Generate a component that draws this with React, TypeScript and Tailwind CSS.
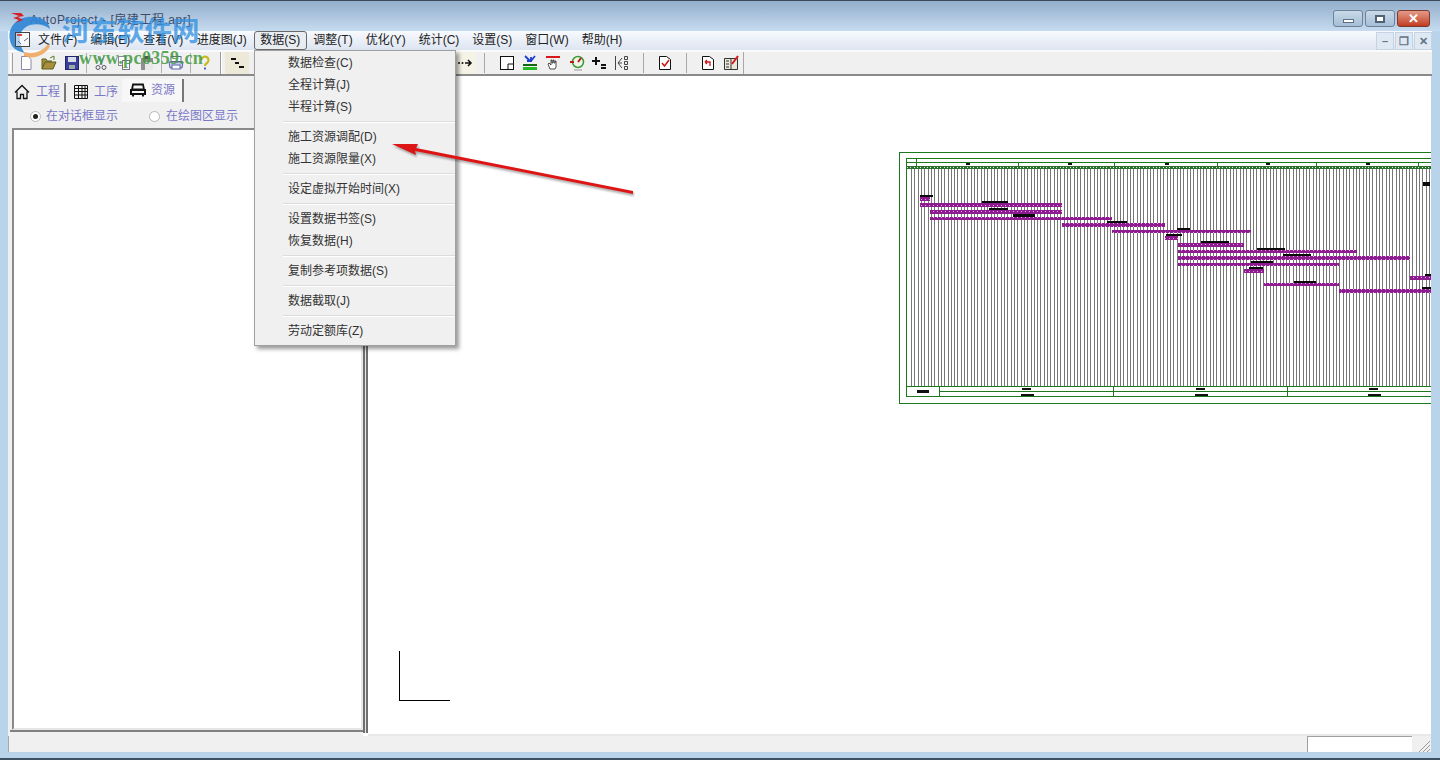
import { Fragment } from "react";

const menus = ["文件(F)", "编辑(E)", "查看(V)", "进度图(J)", "数据(S)", "调整(T)", "优化(Y)", "统计(C)", "设置(S)", "窗口(W)", "帮助(H)"];

const dataMenu = [
  ["数据检查(C)", "全程计算(J)", "半程计算(S)"],
  ["施工资源调配(D)", "施工资源限量(X)"],
  ["设定虚拟开始时间(X)"],
  ["设置数据书签(S)", "恢复数据(H)"],
  ["复制参考项数据(S)"],
  ["数据截取(J)"],
  ["劳动定额库(Z)"],
];

// x1, x2, y, h
const bars = [
  [920, 930, 197, 4], [920, 1062, 203, 4], [930, 1062, 210, 4], [930, 1112, 217, 3], [1062, 1165, 223, 4],
  [1112, 1251, 230, 3], [1165, 1178, 236, 4], [1178, 1244, 243, 4], [1178, 1357, 250, 3], [1178, 1410, 256, 4],
  [1178, 1339, 263, 3], [1244, 1264, 269, 4], [1410, 1431, 276, 4], [1264, 1339, 283, 3], [1339, 1431, 289, 4],
];

// x, y, w, h : tiny unreadable captions over the bars
const blobs = [
  [920, 195, 13, 2], [982, 201, 26, 2], [989, 208, 19, 2], [1013, 214, 22, 3], [1107, 221, 20, 2], [1177, 228, 13, 2],
  [1166, 234, 16, 2], [1201, 241, 28, 2], [1257, 248, 28, 2], [1283, 254, 28, 2], [1251, 261, 22, 2], [1249, 267, 14, 2],
  [1294, 281, 22, 2], [1425, 274, 6, 2], [1422, 287, 9, 2], [1423, 182, 7, 4],
];

function GanttChart() {
  const lines: number[] = [];
  for (let x = 911; x < 1431; x += 3.32) lines.push(Math.round(x) + 0.5);
  const ticks: number[] = [];
  for (let x = 907; x < 1431; x += 3.32) ticks.push(Math.round(x));
  return (
    <svg width="532" height="252" viewBox="899 152 532 252" className="absolute left-[531px] top-[76px]" shapeRendering="crispEdges">
      <defs>
        <pattern id="dots" width="4" height="3" patternUnits="userSpaceOnUse">
          <rect width="4" height="3" fill="#8f1b90" />
          <rect x="1" y="1" width="1" height="1" fill="#d9a6da" />
        </pattern>
      </defs>
      {lines.map((x) => (
        <line key={x} x1={x} x2={x} y1="168" y2="386" stroke="#777777" />
      ))}
      <rect x="899.5" y="152.5" width="600" height="251" fill="none" stroke="#1c7a1c" />
      <rect x="906.5" y="158.5" width="600" height="238" fill="none" stroke="#1c7a1c" />
      <line x1="906" x2="1431" y1="162.5" y2="162.5" stroke="#1c7a1c" />
      <line x1="916.5" x2="916.5" y1="158" y2="166" stroke="#1c7a1c" />
      {[1018, 1114, 1217, 1316, 1418].map((x) => (
        <line key={x} x1={x + 0.5} x2={x + 0.5} y1="162" y2="168" stroke="#1c7a1c" />
      ))}
      {[966, 1068, 1165, 1266, 1366].map((x) => (
        <rect key={x} x={x} y="163" width="4" height="2" fill="#111" />
      ))}
      <rect x="907" y="166" width="524" height="3" fill="#2c6f2c" />
      {ticks.map((x) => (
        <rect key={x} x={x} y="167" width="1" height="1" fill="#dfeadf" />
      ))}
      {bars.map(([a, b, y, h], i) => (
        <rect key={i} x={a} y={y} width={b - a} height={h} fill="url(#dots)" />
      ))}
      {blobs.map(([x, y, w, h], i) => (
        <rect key={i} x={x} y={y} width={w} height={h} fill="#0a0a0a" />
      ))}
      <line x1="906" x2="1431" y1="386.5" y2="386.5" stroke="#1c7a1c" />
      <line x1="939" x2="1431" y1="391.5" y2="391.5" stroke="#1c7a1c" />
      {[939, 1113, 1287].map((x) => (
        <line key={x} x1={x + 0.5} x2={x + 0.5} y1="386" y2="397" stroke="#1c7a1c" />
      ))}
      <rect x="917" y="390" width="12" height="3" fill="#111" />
      {[1022, 1196, 1369].map((x) => (
        <Fragment key={x}>
          <rect x={x} y="388" width="9" height="2" fill="#111" />
          <rect x={x - 1} y="394" width="13" height="2" fill="#111" />
        </Fragment>
      ))}
    </svg>
  );
}

function Ico({ children }: { children: React.ReactNode }) {
  return (
    <svg width="16" height="16" viewBox="0 0 16 16" fill="none" className="shrink-0">
      {children}
    </svg>
  );
}

function ToolbarLeft() {
  return (
    <div className="flex items-center h-full w-[236px] shrink-0 pl-[2px]">
      <div className="w-[3px] h-[20px] border-x border-l-white border-r-[#a0a0a0] mr-[5px] shrink-0" />
      <div className="flex items-center gap-[7px]">
        <Ico><path d="M3.5 1.500h7l2.500 3v10h-9.500z" fill="#fff" stroke="#8a8aa8" /></Ico>
        <Ico><path d="M1 14l3-7h11l-3 7zM1 14V4h4l1 2h5" fill="#a98f3c" stroke="#55601f" /><path d="M9 3l4-2v4" stroke="#5a7a20" /></Ico>
        <Ico><rect x="1.500" y="1.500" width="13" height="13" fill="#3a3f9a" stroke="#22266e" /><rect x="4" y="2" width="8" height="5" fill="#d9dde8" /><rect x="5" y="10" width="6" height="4" fill="#9aa" /></Ico>
        <div className="w-[1px] h-[20px] bg-[#b0b0b0] -mx-[1px]" />
        <Ico><path d="M5 1l4 9M11 1l-4 9" stroke="#667" /><circle cx="5" cy="12.500" r="2" stroke="#556" /><circle cx="11" cy="12.500" r="2" stroke="#556" /></Ico>
        <Ico><rect x="2.500" y="1.500" width="7" height="9" fill="#fff" stroke="#889" /><rect x="6.500" y="5.500" width="7" height="9" fill="#fff" stroke="#778" /></Ico>
        <Ico><rect x="2" y="3" width="12" height="12" fill="#8e8e8e" /><rect x="5" y="1" width="6" height="3" fill="#555" /><rect x="6" y="7" width="8" height="8" fill="#e8e8e8" /></Ico>
        <div className="w-[1px] h-[20px] bg-[#b0b0b0] -mx-[1px]" />
        <Ico><rect x="3" y="1.500" width="10" height="5" fill="#fff" stroke="#668" /><path d="M1 7h14l-1 6H2z" fill="#c8cce8" stroke="#5a62a8" /><rect x="4" y="10" width="8" height="4" fill="#fff" stroke="#5a62a8" /></Ico>
        <div className="w-[1px] h-[20px] bg-[#b0b0b0] -mx-[1px]" />
        <Ico><path d="M4.500 5a3.500 3.500 0 1 1 5.500 3c-1.500 1-2 1.500-2 3" stroke="#c8b820" strokeWidth="2.200" /><rect x="7" y="12.500" width="2" height="2" fill="#5566bb" /></Ico>
      </div>
      <div className="w-[2px] h-[22px] border-x border-l-[#9a9a9a] border-r-white ml-[7px] shrink-0" />
      <div className="w-[24px] h-[22px] ml-[3px] shrink-0 bg-[#ece9d8] flex items-center justify-center">
        <Ico><path d="M2 4h5M6 8h4M10 12h5" stroke="#111" strokeWidth="2" /></Ico>
      </div>
    </div>
  );
}

function ToolbarRight() {
  return (
    <div className="flex items-center h-full ml-[210px]">
      <div className="w-[22px] h-[22px] flex items-center justify-center bg-[#f5f2e6]">
        <Ico><circle cx="2" cy="8" r="1" fill="#111" /><circle cx="5.500" cy="8" r="1" fill="#111" /><path d="M8 8h6M11 5l3 3-3 3" stroke="#111" strokeWidth="1.500" /></Ico>
      </div>
      <div className="w-[1px] h-[20px] bg-[#a8a8a8] ml-[8px] mr-[14px]" />
      <Ico><rect x="1.500" y="1.500" width="13" height="13" fill="#fff" stroke="#111" /><path d="M9 14.500V9h5.500" stroke="#111" /></Ico>
      <div className="w-[7px]" />
      <Ico><path d="M3 1l5 5M13 1L9 6M5 6h4V2" stroke="#1c3fd0" strokeWidth="1.800" /><rect x="1" y="9" width="14" height="2" fill="#116611" /><rect x="1" y="12" width="14" height="3" fill="#22bb22" /></Ico>
      <div className="w-[7px]" />
      <Ico><rect x="1" y="1" width="14" height="2" fill="#d81818" /><path d="M5 14L3 9l1-1 2 2V5h1v3h1V5h1v3h1V6h1v6l-1 2z" fill="#fff" stroke="#222" strokeWidth="0.800" /></Ico>
      <div className="w-[8px]" />
      <Ico><circle cx="9" cy="7" r="5.500" fill="#f2f6e6" stroke="#3a9a3a" strokeWidth="1.500" /><path d="M9 7l3-4M1 7h4" stroke="#c01818" strokeWidth="2" /><path d="M5 15h8" stroke="#999" /></Ico>
      <div className="w-[6px]" />
      <Ico><path d="M5 2v8M1 6h8" stroke="#111" strokeWidth="2" /><rect x="10" y="9" width="5" height="2" fill="#111" /><rect x="10" y="12" width="5" height="2" fill="#111" /></Ico>
      <div className="w-[7px]" />
      <Ico><path d="M1.500 1v14M8 3L4 8l4 5M4 8h4" stroke="#444" /><path d="M10.500 1.500h3v3h-3zM10.500 6.500h3v3h-3zM10.500 11.500h3v3h-3z" stroke="#444" /></Ico>
      <div className="w-[1px] h-[20px] bg-[#a8a8a8] ml-[13px] mr-[13px]" />
      <Ico><path d="M2.500 1.500h7l4 3v10h-11z" fill="#fff" stroke="#111" /><path d="M5 8l2.500 3L12 5" stroke="#c81818" strokeWidth="1.500" /></Ico>
      <div className="w-[1px] h-[20px] bg-[#a8a8a8] ml-[13px] mr-[13px]" />
      <Ico><path d="M2.500 1.500h7l4 3v10h-11z" fill="#fff" stroke="#111" /><path d="M5 7h5v4M5 7l2-2M5 7l2 2" stroke="#c81818" strokeWidth="1.300" /></Ico>
      <div className="w-[7px]" />
      <Ico><path d="M1.500 3.500h13v11h-13zM8 3.500v11M3 6h3M3 9h3M3 12h3" fill="#e8e8d8" stroke="#333" /><path d="M9 9l6-8" stroke="#d81818" strokeWidth="2" /></Ico>
      <div className="w-[1px] h-[22px] bg-[#a8a8a8] ml-[4px]" />
    </div>
  );
}

function LeftPanel() {
  return (
    <div className="w-[355px] h-full bg-[#f0f0f0] flex flex-col text-[12px] text-[#7a78c8]">
      <div className="h-[29px] flex items-center pl-[6px] pt-[3px]">
        <div className="flex items-center gap-[6px] w-[50px]">
          <Ico>
            <path d="M1 8.500L8 1.500l7 7M3 7.500v7h3.500v-4h3v4H13v-7" stroke="#111" strokeWidth="1.300" />
          </Ico>
          <span>工程</span>
        </div>
        <div className="w-[2px] h-[19px] bg-[#777] mr-[7px]" />
        <div className="flex items-center gap-[5px] w-[49px]">
          <Ico>
            <path d="M1.500 1.500h13v13h-13zM1.500 4.500h13M1.500 7.500h13M1.500 11h13M5.500 1.500v13M9 1.500v13M12 1.500v13" stroke="#111" />
          </Ico>
          <span>工序</span>
        </div>
        <div className="flex items-center gap-[5px] h-[23px] w-[62px] pl-[8px] bg-[#f7f7f7] border-r-2 border-[#777] -mt-[4px]">
          <Ico>
            <path d="M3 2.500h10l1 5H2z" stroke="#111" strokeWidth="1.800" />
            <path d="M1 8h14v4H1zM3 12v2.500M13 12v2.500" stroke="#111" strokeWidth="2" />
          </Ico>
          <span>资源</span>
        </div>
      </div>
      <div className="h-[22px] flex items-center pl-[22px]">
        <span className="w-[11px] h-[11px] rounded-full border border-[#b8b8b8] bg-white flex items-center justify-center mr-[5px]">
          <span className="w-[5px] h-[5px] rounded-full bg-[#222]" />
        </span>
        <span className="w-[103px]">在对话框显示</span>
        <span className="w-[11px] h-[11px] rounded-full border border-[#b8b8b8] bg-white mr-[6px]" />
        <span>在绘图区显示</span>
      </div>
      <div className="ml-[4px] mt-[1px] w-[351px] h-[602px] bg-white border-2 border-t-[#8a8a8a] border-l-[#8a8a8a] border-r-[#e6e6e6] border-b-[#e6e6e6]" />
      <div className="ml-[2px] h-[2px] border-b-2 border-[#808080]" />
    </div>
  );
}

export default function App() {
  return (
    <div className="relative w-[1440px] h-[760px] overflow-hidden bg-[#b9d3ea] font-['Liberation_Sans','Noto_Sans_CJK_SC',sans-serif] flex flex-col">
      {/* title bar */}
      <div className="h-[31px] shrink-0 flex items-start bg-gradient-to-b from-[#93aecb] to-[#c6dbef] border-t border-[#3c4a57] pl-[30px]">
        <span className="text-[12px] text-[#404a66] mt-[10px] tracking-[0.55px]">AutoProject - [房建工程.apr]</span>
        <div className="ml-auto flex mt-[9px] mr-[10px] gap-[2px]">
          <div className="w-[30px] h-[17px] rounded-[3px] border border-[#6b8298] bg-gradient-to-b from-[#c9d9e8] to-[#a5bed6] flex items-center justify-center">
            <span className="w-[11px] h-[4px] bg-white border border-[#5c6f84] mt-[4px]" />
          </div>
          <div className="w-[30px] h-[17px] rounded-[3px] border border-[#6b8298] bg-gradient-to-b from-[#c9d9e8] to-[#a5bed6] flex items-center justify-center">
            <span className="w-[10px] h-[8px] border-2 border-[#4f6378] bg-white" />
          </div>
          <div className="w-[33px] h-[17px] rounded-[3px] border border-[#7c3a30] bg-gradient-to-b from-[#e39a88] to-[#c23a20] flex items-center justify-center text-white text-[13px] font-bold leading-none">
            ✕
          </div>
        </div>
      </div>

      {/* menu bar */}
      <div className="h-[19px] shrink-0 mx-[8px] flex items-center bg-gradient-to-b from-[#f8fafd] to-[#dde5f2] text-[12px] text-[#222] pl-[23.500px]">
        {menus.map((m) => (
          <div
            key={m}
            className={
              m === "数据(S)"
                ? "px-[5.500px] h-[19px] leading-[17px] border border-[#6a6a6a] rounded-[3px] bg-[#e8edf2]"
                : m === "进度图(J)"
                  ? "px-[7px] h-[19px] leading-[19px]"
                  : "px-[6.500px] h-[19px] leading-[19px]"
            }
          >
            {m}
          </div>
        ))}
        <div className="ml-auto flex gap-[1px]">
          {["–", "❐", "✕"].map((c) => (
            <div key={c} className="w-[18px] h-[18px] border border-[#c5d3e2] bg-[#dfe9f3] text-[#5f7488] text-[11px] leading-[16px] text-center font-bold">
              {c}
            </div>
          ))}
        </div>
      </div>

      {/* toolbar */}
      <div className="h-[26px] shrink-0 mx-[8px] flex items-center bg-[#f0f0f0] border-t-2 border-[#fafafa] border-b-2 border-b-[#8a8a8a]">
        <ToolbarLeft />
        <ToolbarRight />
      </div>

      {/* work area */}
      <div className="h-[660px] shrink-0 ml-[8px] mr-[9px] flex bg-white">
        <LeftPanel />
        <div className="w-[5px] h-[657px] border-x-2 border-[#6e6e6e] bg-[#e8e8e8]" />
        <div className="relative flex-1 overflow-hidden border-b-2 border-[#e8e8e8]">
          <GanttChart />
          {/* drawing origin axes */}
          <div className="absolute left-[31px] top-[575px] w-[51px] h-[50px] border-l border-b border-black" />
        </div>
      </div>

      {/* status bar */}
      <div className="h-[16px] shrink-0 ml-[8px] mr-[9px] flex bg-[#f0f0f0] border-l border-[#a8a8a8]">
        <div className="ml-auto w-[105px] h-full bg-white border-l border-t border-[#a0a0a0]" />
        <svg width="19" height="16" viewBox="0 0 19 16" className="shrink-0">
          <path d="M18 5L7 16M18 9l-7 7M18 13l-3 3" stroke="#9a9a9a" />
        </svg>
      </div>
      <div className="flex-1 border-b-2 border-[#3c5264]" />

      {/* data menu popup */}
      <div className="absolute left-[254px] top-[50px] w-[202px] h-[296px] bg-[#f0f0f0] border border-[#a0a0a0] shadow-[3px_3px_4px_rgba(0,0,0,0.4)] text-[12px] text-[#333] py-[1px]">
        {dataMenu.map((group, i) => (
          <Fragment key={i}>
            {i > 0 && (
              <div className="h-[8px] ml-[28px] flex items-center">
                <div className="w-full h-[2px] border-t border-[#dcdcdc] border-b border-b-white" />
              </div>
            )}
            {group.map((item) => (
              <div key={item} className="h-[22px] leading-[22px] pl-[33px]">
                {item}
              </div>
            ))}
          </Fragment>
        ))}
      </div>

      {/* red annotation arrow */}
      <svg width="260" height="70" viewBox="0 0 260 70" className="absolute left-[385px] top-[130px] drop-shadow-[1px_2px_1px_rgba(0,0,0,0.35)]">
        <path d="M7 14L33 14L31 18L248 61L248 64L30 21L31 25z" fill="#dd1515" />
      </svg>

      {/* site watermark */}
      <svg width="50" height="50" viewBox="0 0 50 50" className="absolute left-[4px] top-[10px] opacity-90">
        <path d="M8 36C0 20 12 4 32 7c8 1 13 6 14 12-5-4-12-6-20-4-9 3-12 11-9 21 1 3 2 5 4 7-5-1-10-3-13-7z" fill="#2f86d6" />
        <path d="M20 42c9 3 18 0 24-8l2 2c-4 9-16 14-26 10z" fill="#f0a860" />
      </svg>
      <svg width="14" height="12" viewBox="0 0 14 12" className="absolute left-[11px] top-[12px]">
        <path d="M0 1h10l3 3-6 1 5 3-8 3 4-3-6-2 6-2z" fill="#d81f26" />
      </svg>
      <svg width="16" height="16" viewBox="0 0 16 16" className="absolute left-[15px] top-[32px]">
        <rect x="0.500" y="0.500" width="14" height="14" fill="#ffffff" fillOpacity="0.6" stroke="#444" />
        <rect x="2" y="2" width="5" height="2" fill="#d84a4a" />
        <path d="M3 9l3 3M9 9l4-3" stroke="#667" />
      </svg>
      <div className="absolute left-[62px] top-[11px] text-[27.500px] leading-[36px] font-bold text-[#2f8fe0]/75 font-['Noto_Sans_CJK_SC',sans-serif]">河东软件网</div>
      <div className="absolute left-[79px] top-[48px] text-[18px] leading-[20px] font-bold text-[#3f9a3f]/85 font-['Liberation_Serif',serif] tracking-[0.4px]">www.pc0359.cn</div>
    </div>
  );
}
